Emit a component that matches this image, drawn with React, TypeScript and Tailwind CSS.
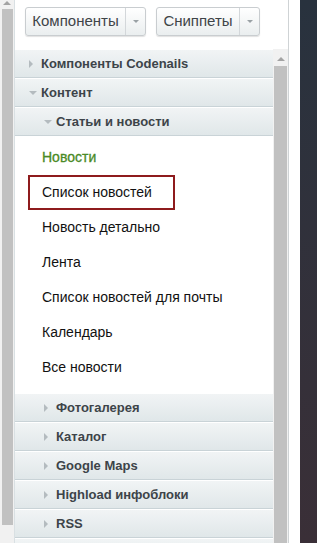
import React from "react";

type Row = { label: string; level: number; open?: boolean };

const topRows: Row[] = [
  { label: "Компоненты Codenails", level: 1 },
  { label: "Контент", level: 1, open: true },
  { label: "Статьи и новости", level: 2, open: true },
];

const items = [
  "Новости",
  "Список новостей",
  "Новость детально",
  "Лента",
  "Список новостей для почты",
  "Календарь",
  "Все новости",
];

const bottomRows: Row[] = [
  { label: "Фотогалерея", level: 2 },
  { label: "Каталог", level: 2 },
  { label: "Google Maps", level: 2 },
  { label: "Highload инфоблоки", level: 2 },
  { label: "RSS", level: 2 },
  { label: "", level: 2 },
];

function Arrow({ open }: { open?: boolean }) {
  return open ? (
    <span className="w-0 h-0 border-l-[4px] border-r-[4px] border-t-[4px] border-l-transparent border-r-transparent border-t-[#b4bbbf]" />
  ) : (
    <span className="w-0 h-0 border-t-[4px] border-b-[4px] border-l-[4px] border-t-transparent border-b-transparent border-l-[#b4bbbf]" />
  );
}

function GroupRow({ row }: { row: Row }) {
  return (
    <div className="h-[29px] shrink-0 flex items-center bg-gradient-to-b from-[#f1f4f5] to-[#e0e7e9] border-t border-t-white border-b border-b-[#c9d3d7]">
      <div
        className={`flex items-center ${row.level === 1 ? "pl-[14px]" : "pl-[29px]"}`}
      >
        <span className="w-[12px] flex items-center">
          {row.label && <Arrow open={row.open} />}
        </span>
        <span className="text-[13px] font-bold text-[#3d4449]">{row.label}</span>
      </div>
    </div>
  );
}

function SplitButton({ label, w }: { label: string; w: string }) {
  return (
    <div className="flex h-[29px] rounded-[3px] border border-[#c9cdd0] bg-gradient-to-b from-white to-[#eaeeef] shadow-[0_1px_1px_rgba(0,0,0,0.12)]">
      <div className={`${w} flex items-center justify-center text-[15px] text-[#3e4448]`}>
        {label}
      </div>
      <div className="w-[20px] border-l border-[#d3d7da] flex items-center justify-center">
        <span className="w-0 h-0 border-l-[3px] border-r-[3px] border-t-[3px] border-l-transparent border-r-transparent border-t-[#9aa1a5]" />
      </div>
    </div>
  );
}

export default function App() {
  return (
    <div
      className="w-[317px] h-[543px] overflow-hidden flex bg-white"
      style={{ fontFamily: '"Liberation Sans", Arial, sans-serif' }}
    >
      {/* outer scrollbar */}
      <div className="w-[14px] shrink-0 bg-[#f1f1f1] flex flex-col items-center">
        <span className="mt-[1px] w-0 h-0 border-l-[4px] border-r-[4px] border-b-[4px] border-l-transparent border-r-transparent border-b-[#a3a3a3]" />
        <div className="mt-[4px] w-[11px] h-[516px] bg-[#c1c1c1]" />
      </div>

      {/* panel */}
      <div className="w-[275px] shrink-0 border-l border-r border-l-[#d9e0e3] border-r-[#cfd3d5] flex flex-col">
        <div className="h-[49px] shrink-0 flex items-start gap-[10px] pt-[7px] pl-[10px]">
          <SplitButton label="Компоненты" w="w-[99px]" />
          <SplitButton label="Сниппеты" w="w-[82px]" />
        </div>

        <div className="flex flex-1 min-h-0">
          <div className="w-[258px] shrink-0 flex flex-col">
            {topRows.map((r) => (
              <GroupRow key={r.label} row={r} />
            ))}
            <div className="shrink-0 pt-[4px] pb-[8px] flex flex-col">
              {items.map((it, i) => (
                <div key={it} className="h-[35px] flex items-center pl-[13px]">
                  <div
                    className={`h-[35px] flex items-center pl-[12px] ${
                      i === 1 ? "w-[147px] border-2 border-[#8e1b1d]" : "border-2 border-transparent"
                    }`}
                  >
                    <span
                      className={`text-[14px] ${
                        i === 0 ? "text-[#4a8a26] [-webkit-text-stroke:0.3px_#4a8a26]" : "text-[#111]"
                      }`}
                    >
                      {it}
                    </span>
                  </div>
                </div>
              ))}
            </div>
            {bottomRows.map((r, i) => (
              <GroupRow key={i} row={r} />
            ))}
          </div>

          {/* inner scrollbar */}
          <div className="w-[15px] shrink-0 bg-[#f1f1f1] flex flex-col items-center">
            <span className="mt-[8px] w-0 h-0 border-l-[4px] border-r-[4px] border-b-[4px] border-l-transparent border-r-transparent border-b-[#a3a3a3]" />
            <div className="mt-[5px] w-[13px] flex-1 bg-[#c1c1c1]" />
          </div>
        </div>
      </div>

      <div className="w-[11px] shrink-0 bg-white" />
      <div className="flex-1 bg-gradient-to-b from-[#28323e] to-[#3a2f37]" />
    </div>
  );
}
